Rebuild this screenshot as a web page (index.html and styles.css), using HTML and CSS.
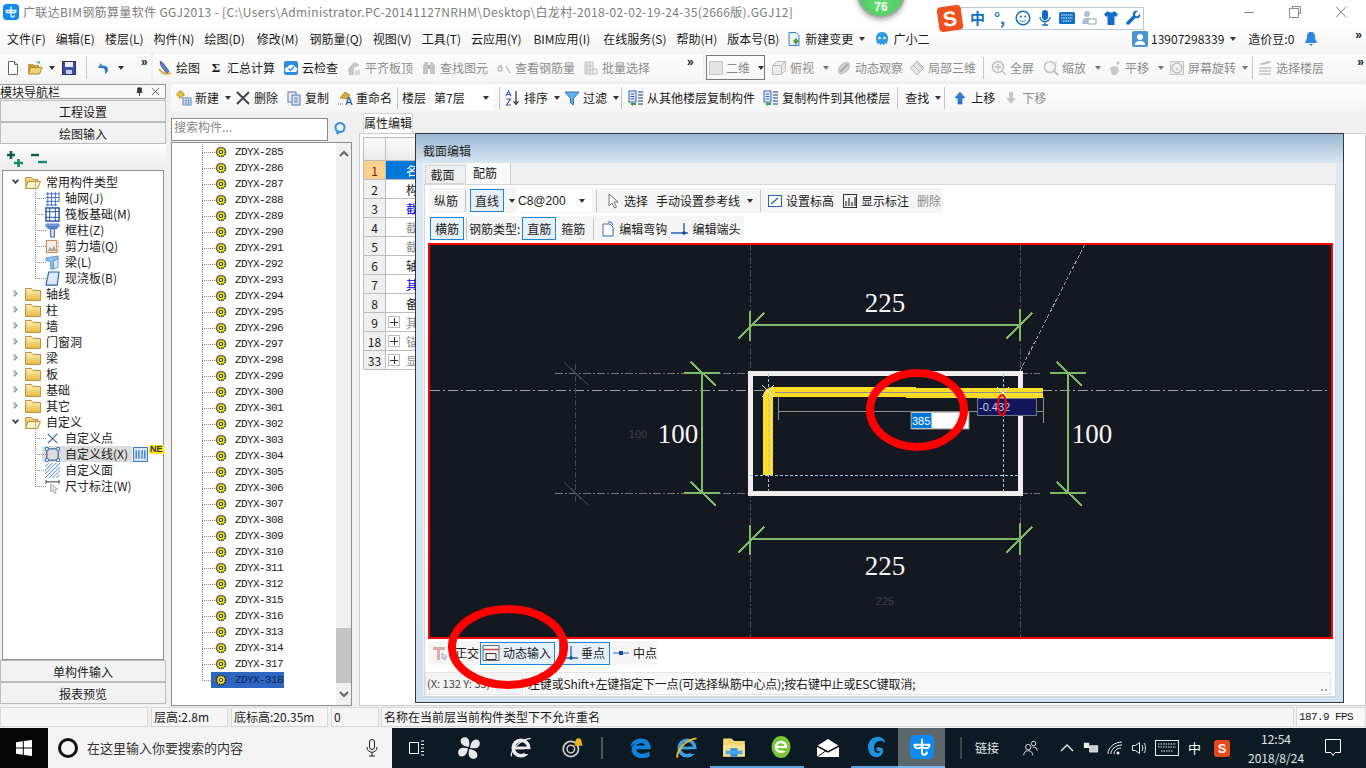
FILE: index.html
```html
<!DOCTYPE html>
<html lang="zh-CN">
<head>
<meta charset="utf-8">
<title>广联达BIM钢筋算量软件 GGJ2013</title>
<link rel="stylesheet" href="styles.css">
</head>
<body>
<svg class="defs" width="0" height="0" aria-hidden="true">
  <defs>
    <linearGradient id="fy" x1="0" y1="0" x2="0" y2="1"><stop offset="0" stop-color="#fff3b8"/><stop offset="1" stop-color="#e9b440"/></linearGradient>
    <symbol id="logo" viewBox="0 0 16 16"><rect width="16" height="16" rx="3.500" fill="#0d8bf2"/><path d="M8 3v8.500a1.600 1.600 0 0 0 3.200 0M3 6.500c0 2.500 2.500 3 5 1.500M13 6.500c0 2.500-2.500 3-5 1.500M3 6.500h10" fill="none" stroke="#fff" stroke-width="1.300" stroke-linecap="round"/></symbol>
    <symbol id="new" viewBox="0 0 16 16"><path d="M3.500 1.500h6l3 3v10h-9z" fill="#fff" stroke="#666"/><path d="M9.500 1.500v3h3" fill="#ddd" stroke="#666"/></symbol>
    <symbol id="open" viewBox="0 0 16 16"><path d="M1 4h5l1 1h5v2H4l-2 7H1z" fill="#c89a3c"/><path d="M3.500 7.500H15L12.500 14H1.500z" fill="#f2cf75" stroke="#b08a30"/><path d="M9 1l4 1-1 2z" fill="#3a7bd5"/></symbol>
    <symbol id="save" viewBox="0 0 16 16"><rect x="1.500" y="1.500" width="13" height="13" fill="#3f4fa8" stroke="#22306f"/><rect x="4" y="2" width="8" height="5" fill="#e8ecf8"/><rect x="5" y="10" width="6" height="4" fill="#c9d0e6"/></symbol>
    <symbol id="undo" viewBox="0 0 16 16"><path d="M5 3L2 8h3.500c2.500 0 4 1 3.500 6 4-2 5-9-3.500-8.500z" fill="#2c7bd1"/></symbol>
    <symbol id="draw" viewBox="0 0 16 16"><path d="M3 1l3 2 6 8-2 3L4 6z" fill="#5a86c8" stroke="#27508f" stroke-width=".7"/><path d="M2 9c3 5 8 6 12 4" fill="none" stroke="#e1a52f" stroke-width="1.600"/></symbol>
    <symbol id="cloud" viewBox="0 0 16 16"><rect x="1" y="1" width="14" height="14" rx="2" fill="#2d8de0"/><path d="M3 12c-2-2-1-5 2-5 1-3 6-3 7 0 2 0 3 3 1 5z" fill="#fff"/><path d="M5.500 8.500l2 2 3.500-4" fill="none" stroke="#2d8de0" stroke-width="1.400"/></symbol>
    <symbol id="align" viewBox="0 0 16 16"><path d="M2 9l6-7 5 2v2L8 8v7H3z" fill="#c6c8c8"/><rect x="9" y="10" width="5" height="5" fill="#d8dada"/></symbol>
    <symbol id="find" viewBox="0 0 16 16"><path d="M2 6l2-4h3v12H2zM14 6l-2-4H9v12h5z" fill="#c4c4c4"/><rect x="7" y="5" width="2" height="4" fill="#aaa"/></symbol>
    <symbol id="eye" viewBox="0 0 16 16"><path d="M2 9c0-3 3-4 4-3M2 9a2 2 0 1 0 4 0 2 2 0 1 0-4 0M10 6l4 7" fill="none" stroke="#bdbdbd" stroke-width="1.400"/></symbol>
    <symbol id="batch" viewBox="0 0 16 16"><path d="M2 2h8v12H2zM4 2v12M7 2v12M2 6h8M2 10h8M10 9h4v5h-4" fill="#eee" stroke="#c0c0c0"/></symbol>
    <symbol id="cube" viewBox="0 0 16 16"><path d="M1.500 5.500l4-4h9v9l-4 4h-9zM1.500 5.500h9v9M10.500 5.500l4-4" fill="#ececec" stroke="#bcbcbc"/></symbol>
    <symbol id="orbit" viewBox="0 0 16 16"><ellipse cx="8" cy="8" rx="7" ry="4" transform="rotate(-45 8 8)" fill="#d3d3d3" stroke="#c0c0c0"/><path d="M4 12l8-8" stroke="#aaa" stroke-width="2"/></symbol>
    <symbol id="l3d" viewBox="0 0 16 16"><path d="M8 1l7 7-7 7-7-7z" fill="#e4e4e4" stroke="#bbb"/><path d="M4 5l7 7M7 2l7 7" stroke="#bbb"/></symbol>
    <symbol id="zfull" viewBox="0 0 16 16"><circle cx="7" cy="7" r="5.500" fill="#f2f2f2" stroke="#bbb" stroke-width="1.400"/><path d="M11 11l4 4M7 4v6M4 7h6" stroke="#bbb" stroke-width="1.300"/></symbol>
    <symbol id="zoom" viewBox="0 0 16 16"><circle cx="7" cy="7" r="5.500" fill="#f6f6f6" stroke="#c2c2c2" stroke-width="1.600"/><path d="M11 11l4 4" stroke="#bbb" stroke-width="2"/><path d="M13 1v4" stroke="#ccc"/></symbol>
    <symbol id="pan" viewBox="0 0 16 16"><path d="M4 8l3-2 5 1 1 4-3 4H6z" fill="#c8c8c8"/><path d="M12 1v5M10 3h4" stroke="#bbb"/></symbol>
    <symbol id="rot" viewBox="0 0 16 16"><rect x="1.500" y="1.500" width="13" height="13" fill="#f0f0f0" stroke="#c6c6c6"/><circle cx="8" cy="8" r="5" fill="none" stroke="#bbb" stroke-width="1.400"/><circle cx="8" cy="9" r="1.500" fill="#ccc"/></symbol>
    <symbol id="floor" viewBox="0 0 16 16"><path d="M3 4l7-2 4 0-7 2zM2 8h12M2 11h12M2 14h12" fill="none" stroke="#c2c2c2" stroke-width="1.300"/></symbol>
    <symbol id="newc" viewBox="0 0 16 16"><path d="M3 1h3v2h2v3H6v2H3V6H1V3h2z" fill="#e8c33a" stroke="#a8871a" stroke-width=".6"/><rect x="7" y="8" width="8" height="7" fill="#fff" stroke="#5a86c0"/><path d="M7 10.500h8M7 12.800h8M10 8v7M12.500 8v7" stroke="#5a86c0" stroke-width=".8"/></symbol>
    <symbol id="del" viewBox="0 0 16 16"><path d="M2 2l12 12M14 2L2 14" stroke="#444" stroke-width="2"/></symbol>
    <symbol id="copy" viewBox="0 0 16 16"><rect x="2" y="2" width="8" height="10" fill="#eaf1fb" stroke="#5878a8"/><rect x="6" y="5" width="8" height="10" fill="#d8e5f7" stroke="#5878a8"/><path d="M8 8h4M8 10h4M8 12h4" stroke="#5878a8" stroke-width=".8"/></symbol>
    <symbol id="ren" viewBox="0 0 16 16"><path d="M3 8l5-6 5 3-3 4z" fill="#d9a93a" stroke="#8a6a1a" stroke-width=".6"/><path d="M9 15l2.500-7h1l2.500 7M10 12.500h4" fill="none" stroke="#2f5da8" stroke-width="1.300"/><path d="M1 14h6" stroke="#777" stroke-dasharray="1 1"/></symbol>
    <symbol id="sort" viewBox="0 0 16 16"><path d="M1 6l2.500-5L6 6M2 4.500h3M1.500 9h4l-4 6h4.500" fill="none" stroke="#2f5da8" stroke-width="1.100"/><path d="M11 1v13M8.500 11l2.500 3.500 2.500-3.500" fill="none" stroke="#333" stroke-width="1.200"/></symbol>
    <symbol id="filter" viewBox="0 0 16 16"><path d="M1 2h14L9.500 8.500V15L6.500 13V8.500z" fill="#62b0e8" stroke="#2e78b8"/></symbol>
    <symbol id="cfrom" viewBox="0 0 16 16"><rect x="1" y="1" width="7" height="11" fill="#e9eef6" stroke="#2f62b8"/><path d="M2.500 4h4M2.500 6.500h4M2.500 9h4" stroke="#2f62b8"/><path d="M2 14l3-2v1h3v2H5v1z" fill="#3aa13a"/><path d="M10 2h5M10 5h5M10 8h5M10 11h5M10 14h5" stroke="#5878a8" stroke-width="1.300"/></symbol>
    <symbol id="up" viewBox="0 0 16 16"><path d="M8 2l5 6h-3v6H6V8H3z" fill="#2a7fd5" stroke="#1c5ea3" stroke-width=".6"/></symbol>
    <symbol id="down" viewBox="0 0 16 16"><path d="M8 14l5-6h-3V2H6v6H3z" fill="#c6c6c6"/></symbol>
    <symbol id="doc" viewBox="0 0 16 16"><path d="M3 1.500h7l3 3v10H3z" fill="#eef4fc" stroke="#3a7bd5"/><path d="M10 7l3 3-3 4-3-4z" fill="#5aa02c"/></symbol>
    <symbol id="xiao" viewBox="0 0 16 16"><path d="M8 1c4 0 6 3 6 6 0 3-1 4-1 6l-2-1-1 2-2-1-2 1-1-2-2 1c0-2-1-3-1-6 0-3 2-6 6-6z" fill="#2c9be8"/><circle cx="5.500" cy="7" r="1.300" fill="#fff"/><circle cx="10.500" cy="7" r="1.300" fill="#fff"/></symbol>
    <symbol id="user" viewBox="0 0 16 16"><rect width="16" height="16" rx="2" fill="#4a94d4"/><circle cx="8" cy="6" r="3" fill="#fff"/><path d="M3 14c0-3 2-4 5-4s5 1 5 4z" fill="#fff"/></symbol>
    <symbol id="bell" viewBox="0 0 16 16"><path d="M8 1c3 0 4 2 4 5 0 3 2 5 2 6H2c0-1 2-3 2-6 0-3 1-5 4-5z" fill="#2f86e0"/><path d="M6 13h4l-2 2z" fill="#2f86e0"/></symbol>
    <symbol id="plus" viewBox="0 0 18 18"><path d="M1 5h8M5 1v8" stroke="#0d5a4e" stroke-width="2.600"/><path d="M8 13h9M12.500 9v8" stroke="#128a78" stroke-width="2.600"/></symbol>
    <symbol id="minus" viewBox="0 0 18 18"><path d="M1 5h8" stroke="#0d5a4e" stroke-width="2.400"/><path d="M8 12h9" stroke="#128a78" stroke-width="2.400"/></symbol>
    <symbol id="fc" viewBox="0 0 16 16"><path d="M.500 2.500h6l1.500 2h7.500v10H.500z" fill="url(#fy)" stroke="#b9933d"/></symbol>
    <symbol id="fo" viewBox="0 0 16 16"><path d="M.500 3.500h6l1.500 2h5v2H3l-2 6z" fill="#f0d07a" stroke="#b9933d"/><path d="M3 7.500h12.500l-3 7H.500z" fill="#fff3c6" stroke="#b9933d"/></symbol>
    <symbol id="grid" viewBox="0 0 16 16"><path d="M1 3h14M1 7h14M1 11h14M1 15h12M3 1v15M7 1v15M11 1v15M15 1v11" fill="none" stroke="#3a6cc0"/></symbol>
    <symbol id="raft" viewBox="0 0 16 16"><rect x="1" y="1" width="14" height="14" fill="#fff" stroke="#1f4f9c" stroke-width="1.500"/><path d="M1 5h14M1 11h14M5 1v14M11 1v14" stroke="#1f4f9c"/></symbol>
    <symbol id="col" viewBox="0 0 16 16"><path d="M1 1h14v3H1zM3 4h10v2H3z" fill="#7fa5dc" stroke="#3a6cc0" stroke-width=".8"/><path d="M6 6h4v9H6z" fill="#cfe0f6" stroke="#2d5aa8"/></symbol>
    <symbol id="wall" viewBox="0 0 16 16"><rect x="1.500" y="1.500" width="11" height="13" fill="#f2f0ec" stroke="#d87c38"/><path d="M3 13l2-5 2 3 3-4 2 6z" fill="#a8a8a8"/><path d="M13 4h2M13 8h2M13 12h2" stroke="#d87c38"/></symbol>
    <symbol id="beam" viewBox="0 0 16 16"><path d="M1 3l13-2v3L9 6v9H6V7L1 6z" fill="#8ec0ea" stroke="#4a88c8" stroke-width=".8"/><path d="M9 6l5-2v9l-5 2z" fill="#d7e8f8" stroke="#4a88c8" stroke-width=".8"/></symbol>
    <symbol id="slab" viewBox="0 0 16 16"><path d="M4 1h11l-2 14H1z" fill="#dbe9fa" stroke="#2c62b4" stroke-width="1.200"/></symbol>
    <symbol id="pt" viewBox="0 0 16 16"><path d="M3 3l4 4M13 3L9 7M3 13l4-4M13 13L9 9" stroke="#2c62b4" stroke-width="1.300"/><circle cx="8" cy="8" r="1" fill="#222"/></symbol>
    <symbol id="ln" viewBox="0 0 16 16"><rect x="2" y="2" width="12" height="12" fill="none" stroke="#1f3f7a"/><path d="M.500 .500h3v3h-3zM12.500 .500h3v3h-3zM.500 12.500h3v3h-3zM12.500 12.500h3v3h-3z" fill="#fff" stroke="#1e78d0"/></symbol>
    <symbol id="hatch" viewBox="0 0 16 16"><path d="M0 4l4-4M0 8l8-8M0 12L12 0M0 16L16 0M4 16L16 4M8 16l8-8M12 16l4-4" stroke="#3a7bd5"/></symbol>
    <symbol id="dim" viewBox="0 0 16 16"><path d="M1 1v4M15 1v4M1 3h14" stroke="#333"/><path d="M6 5l8 6-3.500.5L12 15l-2 .5-1.500-3.500L6 14z" fill="#ddd" stroke="#999" stroke-width=".7"/></symbol>
    <symbol id="gear" viewBox="0 0 12 12"><circle cx="6" cy="6" r="4.500" fill="#ffee20" stroke="#222" stroke-width="1.600" stroke-dasharray="1.300 .7"/><circle cx="6" cy="6" r="1.800" fill="#ffee20" stroke="#222"/></symbol>
    <symbol id="hook" viewBox="0 0 16 16"><path d="M3 3h7l3 3v9H3z" fill="#fff" stroke="#3a68b8"/><path d="M8 1h3l2 3" fill="none" stroke="#3a68b8"/></symbol>
    <symbol id="end" viewBox="0 0 18 16"><path d="M0 12h17M13 2v10" stroke="#2c62b4" stroke-width="1.400"/><circle cx="13" cy="12" r="1.800" fill="#16489c"/></symbol>
    <symbol id="arrow" viewBox="0 0 16 16"><path d="M4 1v12l3-3 2.500 5 2-1-2.500-5h4z" fill="#f4f4f4" stroke="#777"/></symbol>
    <symbol id="lvl" viewBox="0 0 16 16"><rect x="1.500" y="2.500" width="13" height="11" fill="#fff" stroke="#2c62b4"/><path d="M4 11l7-6" stroke="#2c62b4" stroke-width="1.400"/></symbol>
    <symbol id="show" viewBox="0 0 16 16"><rect x="1.500" y="1.500" width="13" height="13" fill="#f2f2f2" stroke="#333"/><path d="M4 13V8M7 13V5M10 13V9M13 13V4" stroke="#333" stroke-width="1.200"/></symbol>
    <symbol id="ortho" viewBox="0 0 16 16"><path d="M0 2h12v3H7v10H4V5H0z" fill="#e0a8a4"/><path d="M9 8l5 4-2 .5 1 2-1.500 .5-1-2-1.500 1z" fill="#d8dfe8" stroke="#7a8694" stroke-width=".5"/></symbol>
    <symbol id="dyn" viewBox="0 0 18 16"><path d="M1 .500h16v15H1z" fill="#f4f4f4" stroke="#666"/><path d="M1 4.500h16" stroke="#c0504d" stroke-width="1.500"/><path d="M4 8.500h10v6H4z" fill="#eee" stroke="#333"/></symbol>
    <symbol id="vert" viewBox="0 0 18 16"><path d="M0 13h18M11 1v12" stroke="#2c62b4" stroke-width="1.400"/><circle cx="11" cy="13" r="1.800" fill="#16489c"/></symbol>
    <symbol id="mid" viewBox="0 0 18 16"><path d="M1 8h16" stroke="#5f8fd0" stroke-width="1.400"/><rect x="7" y="6" width="4" height="4" fill="#16489c"/></symbol>
    <symbol id="cols" viewBox="0 0 14 14"><rect x=".500" y=".500" width="13" height="13" fill="#d9ebfa" stroke="#3a7bd5"/><path d="M3 3v8M5.500 3v8M8.500 3v8M11 3v8" stroke="#3a7bd5" stroke-width="1.300"/></symbol>
  </defs>
</svg>

<div class="app">
  <header class="titlebar">
    <svg class="i logo"><use href="#logo"/></svg>
    <span class="title-text">广联达BIM钢筋算量软件 GGJ2013 - [C:\Users\Administrator.PC-20141127NRHM\Desktop\白龙村-2018-02-02-19-24-35(2666版).GGJ12]</span>
    <span class="wincontrols">
      <svg class="wc" viewBox="0 0 12 12"><path d="M1 6.500h10" stroke="#888"/></svg>
      <svg class="wc" viewBox="0 0 12 12"><path d="M3.500 2.500V.500h8v7h-2M.500 2.500h9v9h-9z" fill="none" stroke="#888"/></svg>
      <svg class="wc" viewBox="0 0 12 12"><path d="M1 1l10 10M11 1L1 11" stroke="#888"/></svg>
    </span>
  </header>

  <nav class="menubar">
    <span class="mi">文件(F)</span><span class="mi">编辑(E)</span><span class="mi">楼层(L)</span><span class="mi">构件(N)</span><span class="mi">绘图(D)</span><span class="mi m2">修改(M)</span><span class="mi m1">钢筋量(Q)</span><span class="mi">视图(V)</span><span class="mi">工具(T)</span><span class="mi">云应用(Y)</span><span class="mi m2">BIM应用(I)</span><span class="mi m3">在线服务(S)</span><span class="mi">帮助(H)</span><span class="mi">版本号(B)</span>
    <span class="tb doc"><svg class="i"><use href="#doc"/></svg>新建变更<i class="caret"></i></span>
    <span class="tb xiao"><svg class="i"><use href="#xiao"/></svg>广小二</span>
    <span class="menu-right">
      <span class="tb"><svg class="i"><use href="#user"/></svg>13907298339<i class="caret"></i></span>
      <span class="beans">造价豆:0</span>
      <svg class="i"><use href="#bell"/></svg>
      <span class="more">»</span>
    </span>
  </nav>

  <div class="toolbar1">
    <div class="group g-quick">
      <svg class="i"><use href="#new"/></svg>
      <span class="tb"><svg class="i"><use href="#open"/></svg><i class="caret"></i></span>
      <svg class="i"><use href="#save"/></svg>
      <i class="sep"></i>
      <span class="tb"><svg class="i"><use href="#undo"/></svg><i class="caret"></i></span>
      <span class="more">»</span>
    </div>
    <div class="group g-main">
      <span class="tb"><svg class="i"><use href="#draw"/></svg>绘图</span>
      <span class="tb"><b class="sigma">Σ</b>汇总计算</span>
      <span class="tb"><svg class="i"><use href="#cloud"/></svg>云检查</span>
      <span class="tb off"><svg class="i"><use href="#align"/></svg>平齐板顶</span>
      <span class="tb off"><svg class="i"><use href="#find"/></svg>查找图元</span>
      <span class="tb off"><svg class="i"><use href="#eye"/></svg>查看钢筋量</span>
      <span class="tb off"><svg class="i"><use href="#batch"/></svg>批量选择</span>
      <span class="more">»</span>
    </div>
    <div class="group g-view">
      <span class="combo2d"><i class="box2d"></i>二维<i class="caret"></i></span>
      <span class="tb off top"><svg class="i"><use href="#cube"/></svg>俯视<i class="caret wide"></i></span>
      <span class="tb off"><svg class="i"><use href="#orbit"/></svg>动态观察</span>
      <span class="tb off"><svg class="i"><use href="#l3d"/></svg>局部三维</span>
      <i class="sep"></i>
      <span class="tb off full"><svg class="i"><use href="#zfull"/></svg>全屏</span>
      <span class="tb off"><svg class="i"><use href="#zoom"/></svg>缩放<i class="caret wide"></i></span>
      <span class="tb off"><svg class="i"><use href="#pan"/></svg>平移<i class="caret wide"></i></span>
      <span class="tb off"><svg class="i"><use href="#rot"/></svg>屏幕旋转<i class="caret"></i></span>
      <i class="sep tight"></i>
      <span class="tb off"><svg class="i"><use href="#floor"/></svg>选择楼层</span>
      <span class="more push">»</span>
    </div>
  </div>

  <div class="work">
    <aside class="nav">
      <div class="nav-head"><span>模块导航栏</span><span class="nav-tools"><svg class="navpin" viewBox="0 0 10 10"><path d="M3 1h4v4l1 1H2l1-1zM5 6v4" fill="#333" stroke="#333"/></svg><svg class="navpin" viewBox="0 0 10 10"><path d="M1 1l8 8M9 1L1 9" stroke="#555"/></svg></span></div>
      <div class="nav-btn">工程设置</div>
      <div class="nav-btn">绘图输入</div>
      <div class="tree-tools"><svg class="pm"><use href="#plus"/></svg><svg class="pm"><use href="#minus"/></svg></div>
      <div class="tree">
        <div class="row"><i class="chev down"></i><svg class="i fold"><use href="#fo"/></svg>常用构件类型</div>
        <div class="row kid"><svg class="i"><use href="#grid"/></svg>轴网(J)</div>
        <div class="row kid"><svg class="i"><use href="#raft"/></svg>筏板基础(M)</div>
        <div class="row kid"><svg class="i"><use href="#col"/></svg>框柱(Z)</div>
        <div class="row kid"><svg class="i"><use href="#wall"/></svg>剪力墙(Q)</div>
        <div class="row kid"><svg class="i"><use href="#beam"/></svg>梁(L)</div>
        <div class="row kid"><svg class="i"><use href="#slab"/></svg>现浇板(B)</div>
        <div class="row"><i class="chev"></i><svg class="i fold"><use href="#fc"/></svg>轴线</div>
        <div class="row"><i class="chev"></i><svg class="i fold"><use href="#fc"/></svg>柱</div>
        <div class="row"><i class="chev"></i><svg class="i fold"><use href="#fc"/></svg>墙</div>
        <div class="row"><i class="chev"></i><svg class="i fold"><use href="#fc"/></svg>门窗洞</div>
        <div class="row"><i class="chev"></i><svg class="i fold"><use href="#fc"/></svg>梁</div>
        <div class="row"><i class="chev"></i><svg class="i fold"><use href="#fc"/></svg>板</div>
        <div class="row"><i class="chev"></i><svg class="i fold"><use href="#fc"/></svg>基础</div>
        <div class="row"><i class="chev"></i><svg class="i fold"><use href="#fc"/></svg>其它</div>
        <div class="row"><i class="chev down"></i><svg class="i fold"><use href="#fo"/></svg>自定义</div>
        <div class="row kid"><svg class="i"><use href="#pt"/></svg>自定义点</div>
        <div class="row kid"><span class="sel"><svg class="i"><use href="#ln"/></svg>自定义线(X)</span><svg class="cols"><use href="#cols"/></svg><span class="ne">NE</span></div>
        <div class="row kid"><svg class="i"><use href="#hatch"/></svg>自定义面</div>
        <div class="row kid"><svg class="i"><use href="#dim"/></svg>尺寸标注(W)</div>
      </div>
      <div class="nav-btn">单构件输入</div>
      <div class="nav-btn">报表预览</div>
    </aside>

    <main class="right">
      <div class="toolbar2">
        <span class="tb"><svg class="i"><use href="#newc"/></svg>新建<i class="caret"></i></span>
        <span class="tb"><svg class="i"><use href="#del"/></svg>删除</span>
        <span class="tb"><svg class="i"><use href="#copy"/></svg>复制</span>
        <span class="tb"><svg class="i"><use href="#ren"/></svg>重命名</span>
        <i class="sep"></i>
        <span class="floor">楼层</span>
        <span class="combo-floor">第7层<i class="caret"></i></span>
        <i class="sep"></i>
        <span class="tb"><svg class="i"><use href="#sort"/></svg>排序<i class="caret"></i></span>
        <span class="tb"><svg class="i"><use href="#filter"/></svg>过滤<i class="caret"></i></span>
        <i class="sep w1"></i>
        <span class="tb"><svg class="i"><use href="#cfrom"/></svg>从其他楼层复制构件</span>
        <span class="tb"><svg class="i"><use href="#cfrom"/></svg>复制构件到其他楼层</span>
        <i class="sep w"></i>
        <span class="tb">查找<i class="caret"></i></span>
        <i class="sep w"></i>
        <span class="tb"><svg class="i"><use href="#up"/></svg>上移</span>
        <span class="tb off"><svg class="i"><use href="#down"/></svg>下移</span>
      </div>
      <div class="panes">
        <section class="listpane">
          <div class="search"><span class="search-box">搜索构件...</span><svg class="search-ic" viewBox="0 0 16 16"><circle cx="7" cy="6.500" r="4.500" fill="#e8f4fc" stroke="#2d8de0" stroke-width="2"/><path d="M4 13l2-3" stroke="#2d8de0" stroke-width="2.400"/></svg></div>
          <div class="list">
            <div class="items">
              <div class="it"><svg class="g"><use href="#gear"/></svg>ZDYX-285</div>
              <div class="it"><svg class="g"><use href="#gear"/></svg>ZDYX-286</div>
              <div class="it"><svg class="g"><use href="#gear"/></svg>ZDYX-287</div>
              <div class="it"><svg class="g"><use href="#gear"/></svg>ZDYX-288</div>
              <div class="it"><svg class="g"><use href="#gear"/></svg>ZDYX-289</div>
              <div class="it"><svg class="g"><use href="#gear"/></svg>ZDYX-290</div>
              <div class="it"><svg class="g"><use href="#gear"/></svg>ZDYX-291</div>
              <div class="it"><svg class="g"><use href="#gear"/></svg>ZDYX-292</div>
              <div class="it"><svg class="g"><use href="#gear"/></svg>ZDYX-293</div>
              <div class="it"><svg class="g"><use href="#gear"/></svg>ZDYX-294</div>
              <div class="it"><svg class="g"><use href="#gear"/></svg>ZDYX-295</div>
              <div class="it"><svg class="g"><use href="#gear"/></svg>ZDYX-296</div>
              <div class="it"><svg class="g"><use href="#gear"/></svg>ZDYX-297</div>
              <div class="it"><svg class="g"><use href="#gear"/></svg>ZDYX-298</div>
              <div class="it"><svg class="g"><use href="#gear"/></svg>ZDYX-299</div>
              <div class="it"><svg class="g"><use href="#gear"/></svg>ZDYX-300</div>
              <div class="it"><svg class="g"><use href="#gear"/></svg>ZDYX-301</div>
              <div class="it"><svg class="g"><use href="#gear"/></svg>ZDYX-302</div>
              <div class="it"><svg class="g"><use href="#gear"/></svg>ZDYX-303</div>
              <div class="it"><svg class="g"><use href="#gear"/></svg>ZDYX-304</div>
              <div class="it"><svg class="g"><use href="#gear"/></svg>ZDYX-305</div>
              <div class="it"><svg class="g"><use href="#gear"/></svg>ZDYX-306</div>
              <div class="it"><svg class="g"><use href="#gear"/></svg>ZDYX-307</div>
              <div class="it"><svg class="g"><use href="#gear"/></svg>ZDYX-308</div>
              <div class="it"><svg class="g"><use href="#gear"/></svg>ZDYX-309</div>
              <div class="it"><svg class="g"><use href="#gear"/></svg>ZDYX-310</div>
              <div class="it"><svg class="g"><use href="#gear"/></svg>ZDYX-311</div>
              <div class="it"><svg class="g"><use href="#gear"/></svg>ZDYX-312</div>
              <div class="it"><svg class="g"><use href="#gear"/></svg>ZDYX-315</div>
              <div class="it"><svg class="g"><use href="#gear"/></svg>ZDYX-316</div>
              <div class="it"><svg class="g"><use href="#gear"/></svg>ZDYX-313</div>
              <div class="it"><svg class="g"><use href="#gear"/></svg>ZDYX-314</div>
              <div class="it"><svg class="g"><use href="#gear"/></svg>ZDYX-317</div>
              <div class="it on"><span class="onbox"><svg class="g"><use href="#gear"/></svg>ZDYX-318</span></div>
            </div>
            <div class="scroll">
              <svg class="sa" viewBox="0 0 16 10"><path d="M4 7l4-4 4 4" fill="none" stroke="#666" stroke-width="2"/></svg>
              <div class="track"><div class="thumb"></div></div>
              <svg class="sa" viewBox="0 0 16 10"><path d="M4 3l4 4 4-4" fill="none" stroke="#666" stroke-width="2"/></svg>
            </div>
          </div>
        </section>
        <section class="props">
          <div class="prop-tabs"><span class="prop-tab">属性编辑</span></div>
          <div class="prop-body">
            <table class="ptable">
              <tr class="ph"><th></th><td></td></tr>
              <tr class="first"><th>1</th><td>名</td></tr>
              <tr><th>2</th><td>构</td></tr>
              <tr class="blue"><th>3</th><td>截</td></tr>
              <tr class="grey"><th>4</th><td>截</td></tr>
              <tr class="grey"><th>5</th><td>截</td></tr>
              <tr><th>6</th><td>轴</td></tr>
              <tr class="blue"><th>7</th><td>其</td></tr>
              <tr><th>8</th><td>备</td></tr>
              <tr class="grey"><th>9</th><td><i class="exp"></i>其</td></tr>
              <tr class="grey"><th>18</th><td><i class="exp"></i>锚</td></tr>
              <tr class="grey"><th>33</th><td><i class="exp"></i>显</td></tr>
            </table>
          </div>
        </section>
      </div>
    </main>
  </div>

  <div class="statusbar">
    <span class="sc s0"></span><span class="sc s1">层高:2.8m</span><span class="sc s2">底标高:20.35m</span><span class="sc s3">0</span><span class="sc s4">名称在当前层当前构件类型下不允许重名</span><span class="sc s5">187.9 FPS</span>
  </div>

  <footer class="taskbar">
    <span class="start"><svg class="winlogo" viewBox="0 0 16 16"><path d="M0 2.200l6.800-1v6.300H0zM7.800 1L16 0v7.500H7.800zM0 8.500h6.800v6.300l-6.800-1zM7.800 8.500H16V16l-8.200-1.100z" fill="#fff"/></svg></span>
    <span class="tsearch"><i class="cortana"></i><span class="tsearch-text">在这里输入你要搜索的内容</span><svg class="mic" viewBox="0 0 12 18"><rect x="3.500" y=".500" width="5" height="10" rx="2.500" fill="none" stroke="#222"/><path d="M1 8c0 7 10 7 10 0M6 13v4M3 17h6" fill="none" stroke="#222"/></svg></span>
    <span class="apps1">
      <span class="tk"><svg class="ti" viewBox="0 0 16 16"><path d="M.500 2.500h9v11h-9zM12 1h3M12 8h3M12 15h3M12 4.500h3M12 11.500h3" fill="none" stroke="#fff"/></svg></span>
      <span class="tk"><svg class="ti big" viewBox="0 0 20 20"><path d="M10 9C6 9 3 7 3 4s4-4 6-2 1 5 1 7zM11 10c0-4 2-7 5-7s4 4 2 6-5 1-7 1zM10 11c4 0 7 2 7 5s-4 4-6 2-1-5-1-7zM9 10c0 4-2 7-5 7s-4-4-2-6 5-1 7-1z" fill="#e6e8ea"/></svg></span>
      <span class="tk"><svg class="ti big" viewBox="0 0 20 20"><circle cx="10" cy="10" r="6.500" fill="none" stroke="#eee" stroke-width="3"/><path d="M4 10h12" stroke="#eee" stroke-width="2.400"/><path d="M2 17C1 12 9 3 18 2" fill="none" stroke="#eee"/><rect x="13" y="11" width="6" height="4" fill="#0d1c24"/></svg></span>
      <span class="tk"><svg class="ti big" viewBox="0 0 22 20"><circle cx="9" cy="11" r="7" fill="none" stroke="#ccc" stroke-width="1.600"/><circle cx="9" cy="11" r="3.500" fill="none" stroke="#ccc" stroke-width="1.400"/><path d="M16 1c2 0 3 1.500 3 4 0 2 1 3 1 3h-8s1-1 1-3c0-2.500 1-4 3-4z" fill="#efb21b"/></svg></span>
    </span>
    <i class="tdiv"></i>
    <span class="apps2">
      <span class="tk2"><svg class="ti big" viewBox="0 0 20 20"><path d="M2 9c1-5 5-7 9-7 5 0 8 3 8 9H7c0 4 6 5 11 2v4c-7 3-15 1-15-6 0-2 1-3 3-5-2 1-3 2-4 3zM7 8h7c0-3-6-3-7 0z" fill="#1082dc"/></svg></span>
      <span class="tk2"><svg class="ti big" viewBox="0 0 20 20"><circle cx="10" cy="10" r="6.500" fill="none" stroke="#39a3e6" stroke-width="3"/><path d="M4 10h12" stroke="#39a3e6" stroke-width="2.400"/><path d="M2 18C1 12 9 3 18 2" fill="none" stroke="#f0b71f" stroke-width="1.600"/><rect x="13" y="11" width="6" height="4" fill="#0d1c24"/></svg></span>
      <span class="tk2 run"><svg class="ti big" viewBox="0 0 20 20"><path d="M1 3h7l2 2h9v13H1z" fill="#f8d66e"/><rect x="1" y="8" width="18" height="10" fill="#fbe08e"/><rect x="7" y="11" width="6" height="7" fill="#2c8cdc"/><rect x="3" y="13" width="14" height="3" fill="#46a6e8"/></svg></span>
      <span class="tk2 run"><svg class="ti big" viewBox="0 0 20 24"><ellipse cx="10" cy="12" rx="9.500" ry="11" fill="#79c83c"/><circle cx="10" cy="12" r="5" fill="none" stroke="#fff" stroke-width="2.400"/><path d="M5 12h10" stroke="#fff" stroke-width="2"/><rect x="12" y="13" width="5" height="3" fill="#79c83c"/></svg></span>
      <span class="tk2"><svg class="ti big" viewBox="0 0 24 20"><path d="M1 8l11-7 11 7v11H1z" fill="#fff"/><path d="M1 8l11 6 11-6" fill="none" stroke="#111" stroke-width="1.500"/><path d="M1 19l10-7" stroke="#111"/></svg></span>
      <span class="tk2 run"><svg class="ti big" viewBox="0 0 20 24"><path d="M15 2C8 1 3 6 3 12c0 7 5 11 10 10 4-1 6-5 5-8-2-2-5-2-7-1l1 3c1 0 3 0 3 1-2 2-6 1-6-4 0-5 4-8 8-7 1 0 3 2 3 2 0-3-2-5-5-6z" fill="#1a94de"/></svg></span>
      <span class="tk2 active"><svg class="ti big" viewBox="0 0 16 16"><use href="#logo"/></svg></span>
    </span>
    <span class="tdiv2"></span>
    <span class="links">链接</span>
    <svg class="ti people" viewBox="0 0 20 18"><circle cx="8" cy="8" r="3" fill="none" stroke="#eee"/><path d="M3 17c0-3 2-5 5-5s5 2 5 5" fill="none" stroke="#eee"/><circle cx="14" cy="4" r="2.500" fill="none" stroke="#eee"/><path d="M13 8c3 0 5 1 5 4" fill="none" stroke="#eee"/></svg>
    <span class="tray">
      <svg class="tr" viewBox="0 0 16 16"><path d="M2 11l6-6 6 6" fill="none" stroke="#eee" stroke-width="1.300"/></svg>
      <svg class="tr" viewBox="0 0 18 16"><path d="M1 2h6v6H1zM3 8v4" fill="#eee"/><rect x="7.500" y="5.500" width="9" height="7" fill="#ccc" stroke="#eee"/></svg>
      <svg class="tr" viewBox="0 0 16 16"><path d="M1 14C1 8 7 2 15 2M4 14c0-4 4-9 11-9M7 14c0-3 3-6 7-6" fill="none" stroke="#eee"/><circle cx="11" cy="13" r="1.500" fill="#eee"/></svg>
      <svg class="tr" viewBox="0 0 16 16"><path d="M1.500 5.500h3l4-3v11l-4-3h-3zM11 5c1 2 1 4 0 6M13 3c2 3 2 7 0 10" fill="none" stroke="#eee"/></svg>
      <svg class="tr kbd" viewBox="0 0 24 16"><rect x=".500" y=".500" width="23" height="15" fill="none" stroke="#eee"/><path d="M3 4h18M3 7h18M6 11h12" stroke="#eee" stroke-dasharray="1.500 1"/></svg>
      <span class="ime">中</span>
      <span class="sg">S</span>
    </span>
    <span class="clock"><span>12:54</span><span>2018/8/24</span></span>
    <svg class="notif" viewBox="0 0 16 18"><path d="M.500 .500h15v13H10l-2 3-2-3H.500z" fill="none" stroke="#fff"/></svg>
  </footer>
</div>

<section class="dialog">
  <div class="dlg-title">截面编辑</div>
  <div class="dlg-inner">
    <div class="dlg-tabs"><span class="dtab">截面</span><span class="dtab cur">配筋</span></div>
    <div class="dlg-page">
      <div class="drow r1">
        <span class="t">纵筋</span><i class="sep"></i>
        <span class="btn b1">直线</span><i class="caret"></i>
        <span class="combo-c">C8@200<i class="caret"></i></span><i class="sep"></i>
        <span class="tb"><svg class="i"><use href="#arrow"/></svg>选择</span>
        <span class="tb">手动设置参考线<i class="caret wide"></i></span><i class="sep"></i>
        <span class="tb lv"><svg class="i"><use href="#lvl"/></svg>设置标高</span>
        <span class="tb"><svg class="i"><use href="#show"/></svg>显示标注</span>
        <span class="tb off">删除</span>
      </div>
      <div class="drow r2">
        <span class="btn b2">横筋</span><i class="sep"></i>
        <span class="t">钢筋类型:</span>
        <span class="btn b2">直筋</span>
        <span class="t t2">箍筋</span><i class="sep s2b"></i>
        <span class="tb"><svg class="i"><use href="#hook"/></svg>编辑弯钩</span>
        <span class="tb tb2"><svg class="i e18"><use href="#end"/></svg>编辑端头</span>
      </div>
      <svg class="canvas" viewBox="430 246 901 392">
        <rect x="429" y="245" width="903" height="394" fill="#141820"/>
        <g class="crisp" fill="none" stroke-width="1">
          <path d="M430 391H1330" stroke="#9aa0a4" stroke-dasharray="10 3 2 3"/>
          <path d="M555 374H750M555 494H750M1020 374H1040M1020 494H1040" stroke="#70767c" stroke-dasharray="8 2 2 2"/>
          <path d="M575 365V505" stroke="#404650" stroke-dasharray="6 2 2 2"/>
          <path d="M750 245V640M1020 245V640" stroke="#4a5058" stroke-dasharray="7 2 2 2"/>
          <path d="M1020 372L1085 245" stroke="#9a9ea4" stroke-dasharray="4 2"/>
          <path d="M564 363L588 386M564 483L588 506" stroke="#444a52"/>
        </g>
        <g class="crisp" stroke="#7fbb66" stroke-width="2" fill="none">
          <path d="M750 326H1020M750 312V342M1020 310V342M738 340L764 314M1006 340L1032 314"/>
          <path d="M750 540H1020M750 526V556M1020 524V556M738 554L764 528M1006 554L1032 528"/>
          <path d="M702 374V494M684 374H720M684 494H720M691 363L716 387M691 483L716 507"/>
          <path d="M1068 374V494M1050 374H1086M1050 494H1086M1057 363L1082 387M1057 483L1082 507"/>
        </g>
        <text class="big" x="885" y="313">225</text>
        <text class="big" x="885" y="576">225</text>
        <text class="big" x="678" y="444">100</text>
        <text class="big" x="1092" y="444">100</text>
        <text class="small" x="638" y="439">100</text>
        <text class="small" x="885" y="606">225</text>
        <rect x="750.500" y="374.500" width="270" height="120" fill="none" stroke="#eeeeee" stroke-width="5"/>
        <path d="M768 476V398Q768 393 773 393H911V394H1043" fill="none" stroke="#ffdd26" stroke-width="10"/>
        <g class="crisp">
          <path d="M775 393H1043" stroke="#8a8a92" stroke-width="1"/>
          <path d="M750 476H1020M768 375V495M1003 375V495" fill="none" stroke="#9fc8ee" stroke-dasharray="3 2"/>
          <path d="M778 398V421M778 412H1043M1043 398V424" fill="none" stroke="#8d8d8d"/>
          <path d="M762 386l12 12M774 386l-12 12M997 388l12 12M1009 388l-12 12" stroke="#f2f2f2"/>
        </g>
        <rect x="911" y="413" width="58" height="17" fill="#fff" stroke="#888"/>
        <rect x="911.500" y="414" width="20" height="15" fill="#0078d7"/>
        <text class="inp" x="912" y="425.500">385</text>
        <rect x="977.500" y="399.500" width="59" height="17" fill="#15155c" stroke="#77778a"/>
        <text class="angle" x="979" y="411.500">-0.432</text>
      </svg>
      <div class="drow r3">
        <span class="tb"><svg class="i"><use href="#ortho"/></svg><span class="ort">正交</span></span>
        <span class="btn b3"><svg class="i e18"><use href="#dyn"/></svg>动态输入</span>
        <span class="btn b4"><svg class="i e18"><use href="#vert"/></svg>垂点</span>
        <span class="tb mid"><svg class="i e18"><use href="#mid"/></svg>中点</span>
      </div>
      <div class="dstatus">
        <span class="ds1">(X: 132 Y: 33)</span>
        <span class="ds2">左键或Shift+左键指定下一点(可选择纵筋中心点);按右键中止或ESC键取消;</span>
      </div>
    </div>
  </div>
</section>

<svg class="annot" viewBox="0 0 1366 768" aria-hidden="true">
  <ellipse cx="917" cy="410" rx="47" ry="37" fill="none" stroke="#f00" stroke-width="8"/>
  <ellipse cx="1002" cy="405" rx="4" ry="10" fill="none" stroke="#f00" stroke-width="2"/>
  <ellipse cx="508" cy="647" rx="56" ry="38" fill="none" stroke="#f00" stroke-width="8"/>
</svg>

<div class="ball"><span>76</span></div>

<div class="sogou">
  <span class="sg-logo">S</span>
  <span class="sg-bar">
    <span class="sg-t">中</span>
    <span class="sg-t pu">°,</span>
    <svg class="sgi" viewBox="0 0 16 16"><circle cx="8" cy="8" r="6.800" fill="none" stroke="#0f6fc6" stroke-width="1.500"/><circle cx="5.800" cy="6.500" r="1" fill="#0f6fc6"/><circle cx="10.200" cy="6.500" r="1" fill="#0f6fc6"/><path d="M5 10c1.500 2 4.500 2 6 0" fill="none" stroke="#0f6fc6"/></svg>
    <svg class="sgi" viewBox="0 0 16 16"><rect x="5" y="0" width="6" height="10" rx="3" fill="#0f6fc6"/><path d="M3 7c0 6 10 6 10 0M8 12v3M5 15h6" fill="none" stroke="#0f6fc6" stroke-width="1.300"/></svg>
    <svg class="sgi" viewBox="0 0 16 16"><rect y="2" width="16" height="12" rx="1.500" fill="#0f6fc6"/><path d="M2 5h12M2 8h12M4 11h8" stroke="#fff" stroke-dasharray="1.500 .8"/></svg>
    <svg class="sgi" viewBox="0 0 16 16"><circle cx="6" cy="4" r="3" fill="#a8bfd4"/><path d="M1 14c0-4 2-6 5-6h3v6z" fill="#a8bfd4"/><rect x="7" y="9" width="8" height="5" fill="#fff" stroke="#8aa6c0"/></svg>
    <svg class="sgi" viewBox="0 0 16 16"><path d="M5 1L1 4l2 3 1.500-1v9h7V6L13 7l2-3-4-3c-1 2-5 2-6 0z" fill="#0f6fc6"/></svg>
    <svg class="sgi" viewBox="0 0 16 16"><path d="M15 4l-3 2.500-2-1 .5-2.500L13 1c-3-1-6 1-5 4.500L1.500 12c-1 2 1 3.500 2.500 2.500L10.500 8c3.500 1 5.500-1 4.500-4z" fill="#0f6fc6"/></svg>
  </span>
</div>
</body>
</html>
```

FILE: styles.css
```css
* { box-sizing: border-box; }
html, body { margin: 0; padding: 0; }
body {
  width: 1366px; height: 768px; overflow: hidden; position: relative;
  background: #f0f0f0; color: #1a1a1a;
  font: 12px/16px "Noto Sans CJK SC", "Liberation Sans", sans-serif;
}
i { font-style: normal; }
.defs { position: absolute; }
.i { width: 16px; height: 16px; flex: none; display: block; }
.i.e18 { width: 18px; }

.app { display: flex; flex-direction: column; height: 768px; }

/* title */
.titlebar { height: 23px; background: #fff; display: flex; align-items: center; padding-left: 3px; color: #7c7c7c; }
.logo { margin-right: 4px; }
.title-text { white-space: nowrap; letter-spacing: .35px; }
.wincontrols { margin-left: auto; display: flex; gap: 34px; padding-right: 19px; }
.wc { width: 12px; height: 12px; display: block; }

/* menu */
.menubar { height: 31px; background: linear-gradient(#fff, #f4f4f4); display: flex; align-items: center; padding-left: 7px; gap: 10px; white-space: nowrap; }
.mi { display: block; }
.m1 { margin-left: 1px; }
.m2 { margin-left: 2px; }
.m3 { margin-left: 3px; }
.doc { margin-left: -3px; }
.xiao { margin-left: -1px; }
.menu-right { margin-left: auto; display: flex; align-items: center; gap: 9px; padding-right: 4px; }
.menu-right .more { margin: -8px 0 0 27px; }
.beans { margin-left: 3px; }
.more { font: 700 12px/12px "Liberation Sans", sans-serif; color: #222; flex: none; }

.tb { display: inline-flex; align-items: center; gap: 3px; white-space: nowrap; flex: none; }
.off { color: #8c8c8c; }
.caret { display: inline-block; width: 0; height: 0; border: 3px solid transparent; border-top: 4px solid #333; border-bottom: 0; margin-left: 3px; flex: none; }
.caret.wide { margin-left: 6px; margin-right: -1px; }
.top .caret.wide { margin-right: 1px; }
.off .caret { border-top-color: #777; }
.sep { display: block; width: 1px; height: 22px; background: #c4c4c4; flex: none; }

/* toolbar 1 */
.toolbar1 { height: 27px; display: flex; gap: 2px; flex: none; }
.group { display: flex; align-items: center; height: 27px; background: linear-gradient(#fdfdfd, #f6f6f6); border-radius: 3px; }
.g-quick { width: 151px; padding-left: 5px; gap: 6px; }
.g-quick .sep { margin: 0 3px; }
.g-quick .more { margin: -12px 0 0 11px; }
.g-main { width: 550px; padding-left: 4px; gap: 8px; }
.g-main .more { margin: -12px 0 0 29px; }
.sigma { width: 16px; text-align: center; font: 700 13px/16px "Liberation Serif", serif; }
.g-view { flex: 1; gap: 6px; padding-left: 1px; }
.g-view .sep { margin: 0 1px; }
.g-view .sep.tight { margin: 0 -2px; }
.g-view .full { margin-right: 3px; }
.g-view .more { margin: -12px 0 0 auto; padding-right: 2px; }
.combo2d { width: 59px; height: 25px; display: flex; align-items: center; border: 1px solid #777; padding-left: 2px; color: #888; gap: 3px; }
.combo2d .caret { margin-left: 5px; }
.box2d { display: block; width: 14px; height: 14px; background: #e4e4e4; border: 1px solid #c4c4c4; }

/* work */
.work { flex: 1; display: flex; min-height: 0; }
.nav { width: 166px; padding: 3px 0 2px; display: flex; flex-direction: column; flex: none; }
.nav-head { height: 15px; margin-bottom: 1px; border: 1px solid #999; border-left: 0; background: #f8f8f8; display: flex; justify-content: space-between; align-items: center; line-height: 13px; }
.nav-tools { display: flex; gap: 7px; padding-right: 5px; }
.navpin { width: 9px; height: 9px; display: block; }
.nav-btn { height: 22px; border: 1px solid #bcbcbc; background: #f2f2f2; text-align: center; line-height: 21px; font-size: 12px; flex: none; }
.tree-tools { height: 26px; background: linear-gradient(#fdfdfd, #ececec); display: flex; align-items: center; gap: 6px; padding: 4px 0 0 6px; flex: none; }
.pm { width: 18px; height: 18px; display: block; }
.tree { flex: 1; margin: 0 2px; border: 1px solid #8e8e8e; background: #fff; padding-top: 3px; min-height: 0; }
.row { height: 16px; display: flex; align-items: center; white-space: nowrap; position: relative; padding-left: 8px; line-height: 16px; }
.fold { margin: 0 5px 0 14px; }
.chev { position: absolute; left: 9px; top: 5px; width: 5px; height: 5px; border: solid #a8a8a8; border-width: 0 2px 2px 0; transform: rotate(-45deg); }
.chev.down { border-color: #555; transform: rotate(45deg); left: 10px; top: 4px; }
.kid { padding-left: 42px; }
.kid .i { margin-right: 5px; width: 15px; height: 15px; }
.kid::before { content: ""; position: absolute; left: 32px; top: -8px; width: 10px; height: 16px; border: dotted #888; border-width: 0 0 1px 1px; }
.sel { display: flex; align-items: center; background: #dcdcdc; margin-left: -3px; padding-left: 3px; width: 90px; height: 16px; }
.cols { width: 15px; height: 15px; display: block; margin-left: 1px; flex: none; }
.ne { position: absolute; left: 146px; top: -1px; background: #ffe119; font: 700 9px/9px "Liberation Sans", sans-serif; padding: 0 1px; color: #333; }

/* right side */
.right { flex: 1; display: flex; flex-direction: column; padding-left: 5px; min-width: 0; }
.toolbar2 { height: 28px; margin-top: 3px; background: linear-gradient(#fdfdfd, #f5f5f5); border-radius: 3px; display: flex; align-items: center; padding-left: 5px; gap: 8px; flex: none; }
.toolbar2 .sep { margin: 0 -3px; }
.toolbar2 .sep.w { margin: 0 -1px; }
.toolbar2 .sep.w1 { margin: 0 -2px; }
.toolbar2 .caret { margin-right: -4px; }
.floor { margin: 0 -2px 0 -1px; }
.combo-floor { width: 62px; height: 24px; background: #fff; display: flex; align-items: center; justify-content: space-between; padding: 0 5px 0 2px; }
.combo-floor .caret { margin-right: 0; }
.panes { flex: 1; display: flex; min-height: 0; }
.listpane { width: 187px; display: flex; flex-direction: column; flex: none; }
.search { height: 30px; display: flex; align-items: center; padding-top: 4px; flex: none; }
.search-box { width: 157px; height: 23px; background: #fff; border: 1px solid #888; color: #888; line-height: 15px; padding-left: 2px; }
.search-ic { width: 16px; height: 16px; margin-left: 5px; display: block; }
.list { flex: 1; display: flex; width: 181px; border: 1px solid #8e8e8e; background: #fff; min-height: 0; overflow: hidden; }
.items { width: 164px; padding-top: 1px; position: relative; flex: none; }
.it { height: 16px; padding-left: 62px; position: relative; display: flex; align-items: center; font: 11px/16px "Liberation Mono", monospace; letter-spacing: -.6px; color: #222; white-space: nowrap; }
.it::before { content: ""; position: absolute; left: 30px; top: 0; width: 12px; height: 8px; border: dotted #888; border-width: 0 0 1px 1px; }
.it::after { content: ""; position: absolute; left: 30px; top: 8px; height: 8px; border-left: 1px dotted #888; }
.it:last-child::after { display: none; }
.g { width: 12px; height: 12px; display: block; margin: 0 8px 0 -19px; flex: none; }
.on .onbox { display: flex; align-items: center; background: #2f66c2; margin-left: -23px; padding-left: 23px; width: 73px; height: 16px; color: #0c1f4f; }
.scroll { flex: 1; background: #f0f0f0; display: flex; flex-direction: column; }
.sa { width: 16px; height: 10px; margin: 6px 0; display: block; flex: none; }
.track { flex: 1; display: flex; flex-direction: column; justify-content: flex-end; }
.thumb { height: 55px; background: #c4c4c4; }

.props { flex: 1; display: flex; flex-direction: column; background: #fff; min-width: 0; margin-left: 1px; }
.prop-tabs { height: 21px; padding: 1px 0 0 4px; background: #f0f0f0; flex: none; }
.prop-tab { display: block; width: 50px; height: 20px; background: #fff; border: 1px solid #d4d4d4; border-bottom: 0; text-align: center; line-height: 17px; white-space: nowrap; }
.prop-body { flex: 1; padding: 3px 0 0 3px; background: #fff; border: 1px solid #ccc; }
.ptable { border-collapse: collapse; width: 400px; table-layout: fixed; border: 1px solid #bbb; }
.ptable th, .ptable td { height: 19px; border: 1px solid #bcbcbc; padding: 0; font-weight: 400; line-height: 17px; }
.ptable th { width: 22px; background: #f0f0f0; text-align: center; }
.ptable td { padding-left: 20px; position: relative; }
.ptable .ph th, .ptable .ph td { height: 23px; background: linear-gradient(#fafafa, #ebebeb); }
.first th { background: #fdd28e; color: #7a1212; }
.first td { background: #0078d7; color: #fff; }
.blue td { color: #0000e8; }
.grey td { color: #8c8c8c; }
.exp { position: absolute; left: 2px; top: 3px; width: 12px; height: 12px; border: 1px solid #bbb; background: linear-gradient(#333, #333) center/8px 1px no-repeat, linear-gradient(#333, #333) center/1px 8px no-repeat, #fff; }

/* status */
.statusbar { height: 22px; display: flex; gap: 2px; padding-top: 1px; flex: none; }
.sc { height: 20px; border: 1px solid #d8d8d8; background: #f5f5f5; line-height: 18px; padding-left: 2px; white-space: nowrap; }
.s0 { width: 148px; } .s1 { width: 77px; margin-left: 1px; } .s2 { width: 97px; margin-left: 1px; } .s3 { width: 48px; margin-left: 1px; }
.s4 { width: 913px; }
.s5 { width: 70px; font: 11px/18px "Liberation Mono", monospace; letter-spacing: -.6px; background: #f8f8f8; }

/* taskbar */
.taskbar { height: 40px; background: #0c1b23; display: flex; align-items: center; flex: none; color: #e4e6e8; }
.start { width: 48px; height: 40px; background: #050505; display: flex; align-items: center; justify-content: center; flex: none; }
.winlogo { width: 16px; height: 16px; display: block; }
.tsearch { width: 344px; height: 40px; background: #f3f3f3; color: #333; display: flex; align-items: center; padding-left: 10px; font-size: 13px; flex: none; }
.cortana { display: block; width: 20px; height: 20px; border-radius: 50%; border: 3px solid #111; }
.tsearch-text { margin-left: 9px; }
.mic { width: 12px; height: 18px; margin-left: auto; margin-right: 14px; display: block; }
.apps1 { display: flex; gap: 4px; padding-left: 1px; }
.tk { width: 48px; height: 40px; display: flex; align-items: center; justify-content: center; flex: none; }
.ti { width: 16px; height: 16px; display: block; flex: none; }
.ti.big { width: 24px; height: 24px; }
.tdiv { display: block; width: 2px; height: 22px; background: #555; margin: 0 13px 0 4px; flex: none; }
.apps2 { display: flex; }
.tk2 { width: 47px; height: 40px; display: flex; align-items: center; justify-content: center; flex: none; }
.run { border-bottom: 2px solid #5a9fe0; }
.active { background: #5c676c; border-bottom: 2px solid #76b9ed; }
.tdiv2 { display: block; width: 2px; height: 22px; background: #3c4448; margin-left: 15px; flex: none; }
.links { margin-left: 13px; font-size: 12px; }
.people { margin-left: 22px; width: 18px; height: 18px; }
.tray { display: flex; align-items: center; gap: 8px; margin-left: 20px; }
.tr { width: 16px; height: 16px; display: block; flex: none; }
.kbd { width: 24px; }
.ime { margin-left: 1px; font-size: 13px; color: #fff; }
.sg { display: block; margin-left: 5px; width: 16px; height: 17px; background: #e9481b; border-radius: 3px; font: 700 13px/17px "Liberation Sans", sans-serif; color: #fff; text-align: center; }
.clock { display: flex; flex-direction: column; align-items: center; margin-left: 16px; width: 60px; line-height: 19px; }
.notif { width: 16px; height: 18px; margin-left: 19px; display: block; }

/* dialog window */
.dialog { position: absolute; left: 415px; top: 133px; width: 929px; height: 570px; border: 1px solid #2e3a40; background: linear-gradient(#9ab6d3, #dbe8f5 30px, #cfe2f2); padding: 0 7px 5px 7px; display: flex; flex-direction: column; }
.dlg-title { height: 29px; line-height: 34px; flex: none; color: #222; }
.dlg-inner { flex: 1; background: #f0f0f0; display: flex; flex-direction: column; min-height: 0; }
.dlg-tabs { height: 21px; display: flex; align-items: flex-end; padding-left: 2px; flex: none; }
.dtab { width: 41px; height: 19px; background: #efefef; border: 1px solid #d4d4d4; text-align: center; line-height: 18px; padding-right: 6px; }
.dtab.cur { width: 45px; height: 21px; background: #f9f9f9; border: 0; border-right: 1px solid #ccc; line-height: 20px; }
.dlg-page { flex: 1; background: #fff; border: 1px solid #d8d8d8; margin: 0 0 0 1px; padding: 0 4px; display: flex; flex-direction: column; min-height: 0; }
.drow { display: flex; align-items: center; flex: none; white-space: nowrap; background: #f5f5f5; width: max-content; }
.r1 { height: 25px; margin-top: 3px; padding: 0 2px 0 5px; gap: 7px; }
.r1 .tb { gap: 3px; margin-left: 1px; }
.r1 .tb.lv { margin-left: -1px; }
.r1 .caret.wide { margin-left: 4px; margin-right: 0; }
.r2 { height: 25px; margin-top: 3px; padding: 0 4px 0 1px; gap: 2px; }
.r2 .sep { margin: 0; }
.r2 .t2 { margin-left: 3px; }
.r2 .sep.s2b { margin: 0 4px 0 6px; }
.r2 .tb2 { margin-left: 2px; }
.btn { display: flex; align-items: center; justify-content: center; gap: 3px; border: 1px solid #1c86d8; background: #e6f0f8; flex: none; }
.b1 { width: 34px; height: 23px; margin-left: -3px; margin-right: -5px; }
.b2 { width: 34px; height: 23px; }
.b3 { width: 75px; height: 23px; margin-left: -3px; justify-content: flex-start; padding-left: 1px; }
.b4 { width: 51px; height: 23px; justify-content: flex-start; }
.combo-c { width: 76px; height: 23px; display: flex; align-items: center; justify-content: space-between; background: #fff; padding: 0 7px 0 2px; font: 12px/16px "Liberation Sans", sans-serif; margin-left: -6px; margin-right: -3px; }
.canvas { display: block; width: 905px; height: 396px; border: 2px solid #f00; margin: 2px 0 0 -1px; flex: none; }
.canvas text { text-anchor: middle; }
.crisp { shape-rendering: crispEdges; }
.big { font: 27px "Liberation Serif", serif; fill: #f4f6f8; }
.small { font: 11px "Liberation Sans", sans-serif; fill: #3c4048; }
.canvas .inp, .canvas .angle { text-anchor: start; font: 11px "Liberation Sans", sans-serif; }
.inp { fill: #fff; }
.angle { fill: #c8c8e8; }
.r3 { height: 24px; margin-top: 2px; padding-left: 4px; gap: 4px; }
.r3 .tb { gap: 5px; }
.r3 .mid { gap: 3px; margin-left: -2px; }
.ort { margin-left: 1px; }
.dstatus { display: flex; gap: 2px; margin: 7px 0 0 -4px; flex: none; height: 23px; }
.ds1 { width: 98px; background: #f4f4f4; border: 1px solid #e4e4e4; padding-left: 1px; line-height: 21px; font-size: 11px; color: #444; }
.ds2 { flex: 1; background: radial-gradient(#aaa 1px, transparent 1.500px) right 2px bottom 2px/4px 4px no-repeat, radial-gradient(#aaa 1px, transparent 1.500px) right 6px bottom 2px/4px 4px no-repeat, #f8f8f8; border: 1px solid #e4e4e4; padding-left: 2px; line-height: 21px; letter-spacing: -.15px; }

/* overlays */
.annot { position: absolute; left: 0; top: 0; width: 1366px; height: 768px; pointer-events: none; }
.ball { position: absolute; left: 857px; top: -30px; width: 48px; height: 48px; border-radius: 50%; background: radial-gradient(circle at 50% 70%, #66dd72, #3bbd55); border: 2px solid #a6aaa6; box-shadow: 0 2px 5px rgba(0,0,0,.3); display: flex; align-items: flex-end; justify-content: center; color: #fff; font: 700 12px/16px "Liberation Sans", sans-serif; padding-bottom: 1px; }
.sogou { position: absolute; left: 938px; top: 4px; height: 28px; display: flex; align-items: center; }
.sg-logo { display: block; width: 24px; height: 25px; background: #f0501e; border-radius: 4px; transform: rotate(-8deg); color: #fff; font: 700 21px/25px "Liberation Sans", sans-serif; text-align: center; position: relative; }
.sg-bar { display: flex; align-items: center; gap: 6px; width: 184px; height: 23px; margin-left: -2px; padding-left: 9px; background: #fff; border: 1px solid #b6cbdc; }
.sg-t { color: #0f6fc6; font-weight: 700; font-size: 15px; width: 16px; }
.pu { width: 15px; line-height: 14px; margin-left: 2px; }
.sgi { width: 16px; height: 16px; display: block; flex: none; }
```
